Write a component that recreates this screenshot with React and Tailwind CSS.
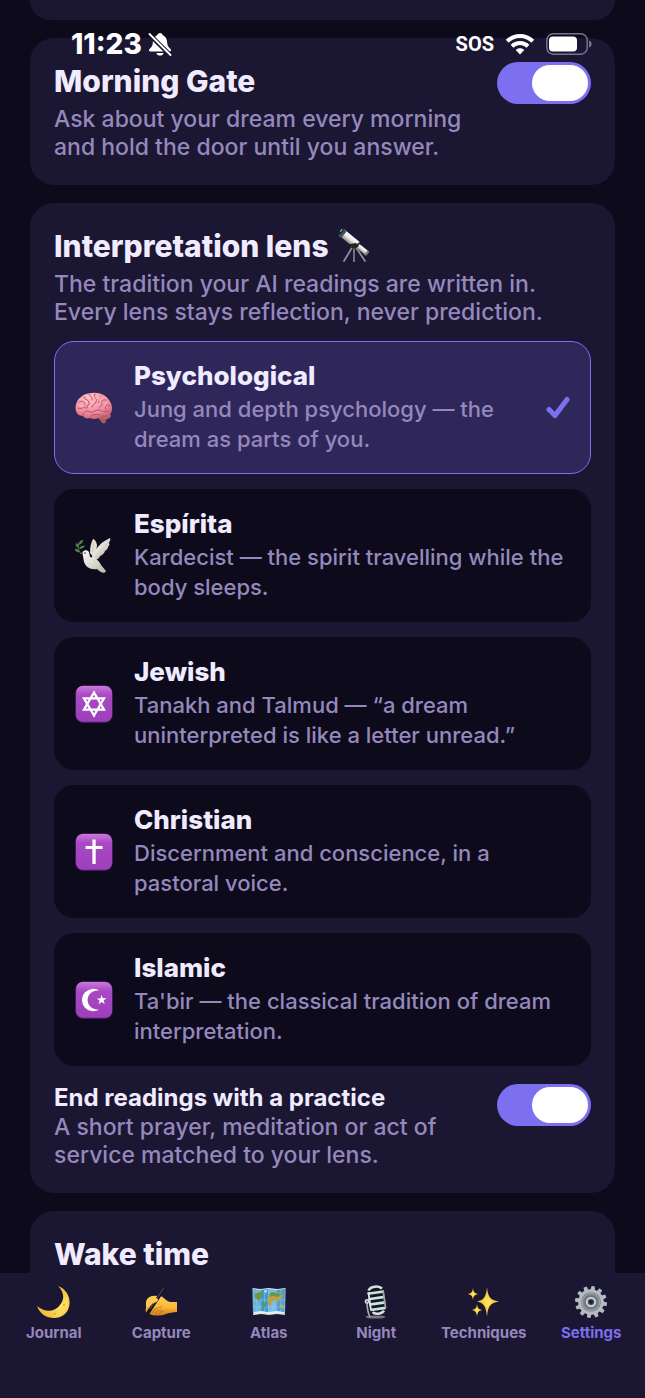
import React, { useState } from "react";

const svg = "block shrink-0";

function Telescope() {
  return (
    <svg className={svg + " h-9 w-9"} viewBox="0 0 36 36" aria-hidden="true">
      <defs>
        <linearGradient id="tube" x1="0" y1="0" x2="0" y2="1">
          <stop offset="0" stopColor="#ffffff" />
          <stop offset="0.5" stopColor="#e9e4dc" />
          <stop offset="1" stopColor="#8c857f" />
        </linearGradient>
      </defs>
      <path d="M16 18 7 33M17 18v15M18 18l10 15" stroke="#8b8f98" strokeWidth="1.8" strokeLinecap="round" />
      <path d="M17 19v13" stroke="#5b5e68" strokeWidth="1" />
      <g transform="rotate(39 17 15)">
        <rect x="2" y="10.6" width="19" height="8" rx="1" fill="url(#tube)" />
        <rect x="-1" y="10" width="5" height="9.2" rx="2" fill="#43535d" />
        <ellipse cx="-0.4" cy="14.6" rx="1.8" ry="3.8" fill="#16242c" />
        <ellipse cx="-0.8" cy="13.4" rx="0.8" ry="1.8" fill="#72a5ae" />
        <rect x="20" y="11.5" width="2" height="6.4" fill="#3a3a42" />
        <rect x="22" y="12.3" width="11" height="5" rx="1" fill="url(#tube)" />
        <rect x="32" y="12" width="2.6" height="5.6" rx="1" fill="#85808a" />
      </g>
      <path d="m13 16 6-1 3 3-5 3-4-2z" fill="#25252e" />
    </svg>
  );
}

function Brain() {
  return (
    <svg className={svg + " h-[38px] w-[38px]"} viewBox="0 0 38 38" aria-hidden="true">
      <defs>
        <radialGradient id="brain" cx="0.4" cy="0.2" r="0.9">
          <stop offset="0" stopColor="#ffc0c7" />
          <stop offset="0.6" stopColor="#f190a0" />
          <stop offset="1" stopColor="#bd5669" />
        </radialGradient>
      </defs>
      <path d="M20 27c3 1 4 3 7 7 2 1 4 0 4-2l-1-6z" fill="#a65b59" />
      <path d="M22 26c1 5 11 7 14 1l-2-5-10 1z" fill="#b76368" />
      <path d="M2 24C-1 20 1 11 6 8c3-3 7-4 11-4 7-1 14 2 17 7 3 4 4 9 2 13-2 3-6 3-9 2-3 4-8 5-12 3-3 1-6 0-7-2-3 0-5-1-6-3z" fill="url(#brain)" />
      <g fill="none" stroke="#b64f68" strokeWidth="1" strokeLinecap="round">
        <path d="M4 13c4-2 6 0 6 3M9 8c0 3 4 2 5 5s-3 3-2 6M14 5c1 3 4 3 3 6M20 5c-3 4 3 4 1 8-1 3-4 2-4 5M26 7c-4 2 0 5-3 7M31 11c-4-1-5 2-4 4s-3 2-3 4M35 17c-4-3-6 1-4 4M3 19c4 2 5-2 8 0M8 26c1-4 4-5 7-3 3 1 5-2 8-2 4 0 5 3 11 1M16 28c0-3 6-3 9-2" />
      </g>
      <g fill="none" stroke="#ffd0d2" strokeWidth="0.7" strokeLinecap="round">
        <path d="M6 10c2-1 3 1 5 3M17 6c2 1 1 3 3 4M24 7c1 2-1 3 1 5M32 13c-2 1-1 3-2 4M4 16c1 1 3 0 4 2" />
      </g>
    </svg>
  );
}

function Dove() {
  return (
    <svg className={svg + " h-[38px] w-[38px]"} viewBox="0 0 38 38" aria-hidden="true">
      <defs>
        <linearGradient id="dove" x1="0" y1="0" x2="1" y2="1">
          <stop offset="0" stopColor="#fffef8" />
          <stop offset="1" stopColor="#bdb8ae" />
        </linearGradient>
      </defs>
      <path d="M15 16c0-6 1-10 3-14 2 0 4 4 4 7l-3 12z" fill="#e4dfd6" />
      <path d="M17 19C20 12 26 5 35 1c1 2-1 4-1 5 1 1 0 3-1 4 0 2-2 3-3 4-1 3-3 4-5 5-1 3-4 4-7 5z" fill="url(#dove)" />
      <path d="M7 16c1-3 5-4 7-1l1 5c4 0 9 3 11 8l5 6c-1 3-5 2-9-2-7 1-11-2-13-7l-1-6z" fill="url(#dove)" />
      <path d="M20 20 34 5M21 21l11-10M22 22l7-7M19 5l-2 10M21 29l7 4M20 31l8 3" stroke="#c2bcb2" strokeWidth="0.6" fill="none" />
      <circle cx="10" cy="16" r="0.8" fill="#28232b" />
      <path d="m8 15-3 1 3 2z" fill="#6c5d57" />
      <path d="M6 17C3 13 3 10 4 5" stroke="#4d762f" strokeWidth="1" fill="none" />
      <g fill="#538543">
        <path d="M4 8C4 4 6 3 8 3c0 3-2 4-4 5zM4 11C1 10 0 8 1 6c3 1 3 3 3 5zM4 12c1-3 3-4 6-3-1 2-4 3-6 3zM5 15c-3 1-5-1-5-3 2-1 4 1 5 3z" />
      </g>
    </svg>
  );
}

function Badge({ id, children }) {
  return (
    <svg className={svg + " h-[38px] w-[38px]"} viewBox="0 0 38 38" aria-hidden="true">
      <defs>
        <linearGradient id={id} x1="0" y1="0" x2="0" y2="1">
          <stop offset="0" stopColor="#c979dc" />
          <stop offset="0.25" stopColor="#a94ac4" />
          <stop offset="1" stopColor="#9c3fbb" />
        </linearGradient>
      </defs>
      <rect x="0.5" y="0.5" width="37" height="37" rx="7.5" fill="#7a2a98" />
      <rect x="1" y="1" width="36" height="35.5" rx="7" fill={"url(#" + id + ")"} />
      {children}
    </svg>
  );
}

function StarBadge() {
  return (
    <Badge id="badge-star">
      <path d="M19 7.500 29 24.600H9zM19 30.500 9 13.400h20z" fill="none" stroke="#fff" strokeWidth="2.3" />
    </Badge>
  );
}
function CrossBadge() {
  return (
    <Badge id="badge-cross">
      <path d="M17.400 6.500h3.300v6.500h6.800v3h-6.800v15h-3.300V16h-6.800V13h6.800z" fill="#fff" />
    </Badge>
  );
}
function CrescentBadge() {
  return (
    <Badge id="badge-crescent">
      <path d="M24.500 9.800A11.200 11.200 0 1 0 24.500 28.200A9.500 9.500 0 1 1 24.500 9.800z" fill="#fff" />
      <path d="m26.500 14 1.300 3.300 3.700-.2-2.900 2.300 1.200 3.600-3.200-1.900-2.900 2.200.9-3.700-2.900-2 3.700-.2z" fill="#fff" />
    </Badge>
  );
}

function Moon() {
  return (
    <svg className={svg + " h-[34px] w-[34px]"} viewBox="0 0 34 34" aria-hidden="true">
      <defs>
        <radialGradient id="moon" cx="0.7" cy="0.6" r="0.6">
          <stop offset="0" stopColor="#ffe56e" />
          <stop offset="1" stopColor="#f0b936" />
        </radialGradient>
      </defs>
      <path d="M21 1c17 6 15 32-4 32C9 33 3 29 0 21c8 7 18 6 23-1 5-6 4-13-2-19z" fill="url(#moon)" />
      <path d="M29 12c3 10-3 18-13 19" fill="none" stroke="#ffdf61" strokeWidth="1.200" />
      <circle cx="27" cy="20" r="1" fill="#dda12c" />
      <circle cx="18" cy="29" r="1" fill="#dda12c" />
    </svg>
  );
}

function WritingHand() {
  return (
    <svg className={svg + " h-[34px] w-[34px]"} viewBox="0 0 34 34" aria-hidden="true">
      <defs>
        <linearGradient id="hand" x1="0" y1="0" x2="0" y2="1">
          <stop offset="0" stopColor="#ffd15b" />
          <stop offset="0.600" stopColor="#f8b637" />
          <stop offset="1" stopColor="#cf7c1d" />
        </linearGradient>
      </defs>
      <path d="M2 18c0-5 5-8 10-7 3-1 6 0 9 3 2 2 4 3 6 3h6v10c-4 0-8 1-11 2-5 2-13 2-16 0-4 0-5-3-4-6z" fill="url(#hand)" />
      <path d="M8 28c2-4 5-6 10-6M11 29c1-3 3-4 6-4M15 29c1-2 3-3 5-3" stroke="#c87920" strokeWidth="1.100" fill="none" />
      <path d="M20 1c2-1 3 0 2.500 2L6 28l-4.500 5-1-1L3 26z" fill="#17161e" />
      <path d="M20 2.500 6 24" stroke="#656475" strokeWidth="0.800" />
      <path d="M3 15c4-5 11-3 11 0-1 3-5 2-7 5-2 3-4 3-5 0z" fill="#ffcb51" />
      <path d="M14 15c-1 3-5 2-7 5-1 2-2 2.500-3 2" fill="none" stroke="#d58a26" strokeWidth="0.900" />
    </svg>
  );
}

function WorldMap() {
  return (
    <svg className={svg + " h-[34px] w-[34px]"} viewBox="0 0 34 34" aria-hidden="true">
      <path d="m.5 3 8 1 8-1 9 1 8-1-.500 27-8-1-8 1-8-1-8 1z" fill="#dbe4db" />
      <path d="m1 4 7.500 1v22L1 29z" fill="#66b5e5" />
      <path d="m8.500 5 8-1v24l-8-1z" fill="#3b99d4" />
      <path d="m16.500 4 8.500 1v22l-8.500 1z" fill="#70bde9" />
      <path d="m25 5 8-1-.500 25-7.500-2z" fill="#469fd6" />
      <path d="M1 15h32M1 22h32M5 4v24M12.500 4v24M21 4v24M29 4v24" stroke="#a8d6ed" strokeWidth="0.400" />
      <path d="m3 9 4-2 5 1-2 4-2 2-1 3-2-3-2-1z" fill="#729545" />
      <path d="m10 17 3 1 1 2-3 5-1-4z" fill="#609952" />
      <path d="m16 12 3-4 4 1 4-2 4 3-1 3-3 2-2 3-2-3-3 2-2 5-2-4-1-3z" fill="#bda24d" />
      <path d="m17 9 3-2 5 1 5 1-4 3-5-1-2 1z" fill="#66994b" />
      <path d="m27 21 2-2 3 2-1 3z" fill="#c4ac6a" />
      <path d="m12 6 3-1-1 3z" fill="#eef7f8" />
      <path d="m2 27 7-1 7 1 9-1 7 1v2l-7-1-8 1-8-1-7 1z" fill="#e4eef0" />
    </svg>
  );
}

function Microphone() {
  return (
    <svg className={svg + " h-[34px] w-[34px]"} viewBox="0 0 34 34" aria-hidden="true">
      <defs>
        <linearGradient id="mic" x1="0" y1="0" x2="1" y2="0">
          <stop offset="0" stopColor="#8c9298" />
          <stop offset="0.400" stopColor="#f1f5f5" />
          <stop offset="1" stopColor="#90999f" />
        </linearGradient>
      </defs>
      <ellipse cx="16.500" cy="32" rx="10" ry="1.600" fill="#77787f" />
      <path d="M8 17c0 7 1 11 3 15" fill="none" stroke="#a9aeb2" strokeWidth="1.600" />
      <g transform="rotate(-8 18 15)">
        <rect x="9" y="1" width="17.500" height="28" rx="6.500" fill="#10191f" />
        <path d="M9.500 7.500h16.500M9.500 13h16.500M9.500 18.500h16.500M10 24h15.500" stroke="#cfe0e6" strokeWidth="2.600" />
        <path d="M11 4.500c2-4 11-4 13.500 0M12 26.500c2 3 9 3 11.500 0" stroke="#d7dfe1" strokeWidth="2.600" fill="none" />
        <rect x="9.700" y="6" width="1.800" height="18" fill="#e1e7e8" />
        <rect x="24.500" y="6" width="1.800" height="18" fill="#9ba3a8" />
      </g>
      <circle cx="8" cy="16.500" r="2.400" fill="#d5d9dc" />
      <circle cx="8" cy="16.500" r="1" fill="#72777e" />
    </svg>
  );
}

function Sparkles() {
  return (
    <svg className={svg + " h-[34px] w-[34px]"} viewBox="0 0 34 34" aria-hidden="true">
      <defs>
        <radialGradient id="spark">
          <stop offset="0" stopColor="#ffed62" />
          <stop offset="1" stopColor="#f4a928" />
        </radialGradient>
      </defs>
      <path d="M20 2c1 10 3 13 12 14.500C23 18 21 21 20 32c-1-11-3-14-10-15.500C17 15 19 12 20 2z" fill="url(#spark)" />
      <path d="M6 3c.500 4 1.500 5 5 6-3.500 1-4.500 2-5 6-.500-4-1.500-5-5-6 3.500-1 4.500-2 5-6z" fill="url(#spark)" />
      <path d="M10 19c.500 4 1.500 5 5 6-3.500 1-4.500 2-5 7-.500-5-1.500-6-5-7 3.500-1 4.500-2 5-6z" fill="url(#spark)" />
    </svg>
  );
}

function Gear() {
  const teeth = [0, 30, 60, 90, 120, 150, 180, 210, 240, 270, 300, 330];
  return (
    <svg className={svg + " h-[34px] w-[34px]"} viewBox="0 0 34 34" aria-hidden="true">
      {teeth.map((a) => (
        <path key={a} d="m14.700 6 .6-5h3.400l.6 5z" fill="#b6bac2" transform={"rotate(" + (a + 8) + " 17 17)"} />
      ))}
      <circle cx="17" cy="17" r="12.800" fill="#b5bac1" />
      <circle cx="17" cy="17" r="9.800" fill="#777e85" />
      <circle cx="17" cy="17" r="8.500" fill="none" stroke="#a5abb2" />
      <circle cx="17" cy="17" r="6" fill="#60676e" />
      <circle cx="17" cy="17" r="4.200" fill="#383f4a" stroke="#c7cbd1" strokeWidth="2.300" />
      <circle cx="17" cy="17" r="1.800" fill="#20202f" />
    </svg>
  );
}

function StatusBar() {
  return (
    <header className="pointer-events-none absolute inset-x-0 top-0 z-10 flex h-[88px] items-center justify-between pr-[53px] pl-[71px] text-white">
      <div className="flex items-center gap-[6px]">
        <span className="text-[28px] leading-8 font-extrabold">11:23</span>
        <svg className={svg + " h-6 w-6"} viewBox="0 0 24 24" role="img" aria-label="Silent mode">
          <defs>
            <mask id="bell-cut">
              <rect width="24" height="24" fill="#fff" />
              <path d="M0 1 24 25" stroke="#000" strokeWidth="4.500" />
            </mask>
          </defs>
          <g fill="#fff" mask="url(#bell-cut)">
            <path d="M12 1c1.500 0 2.500 1 2.700 2.200C18 4.500 19 7.500 19.200 11c.2 3 1.500 4.500 3.300 6 1 .9.600 2.500-.8 2.500H2.300C.900 19.500.500 18 1.500 17c1.800-1.500 3.100-3 3.300-6C5 7.500 6 4.500 9.300 3.200 9.500 2 10.500 1 12 1z" />
            <path d="M8.300 21h7.400c-.5 1.700-2 2.600-3.700 2.600S8.800 22.700 8.300 21z" />
          </g>
          <path d="m1.500 2 21 21" stroke="#fff" strokeWidth="1.800" strokeLinecap="round" />
        </svg>
      </div>
      <div className="flex items-center gap-[11px]">
        <span className="font-['Roboto',sans-serif] text-[20px] leading-8 font-bold">SOS</span>
        <svg className={svg + " h-[22px] w-[30px]"} viewBox="0 0 30 22" role="img" aria-label="Wi-Fi">
          <g fill="none" stroke="#fff" strokeWidth="4">
            <path d="M2.200 8.200c7.200-7 18.400-7 25.600 0" />
            <path d="M7 13.200c4.600-4.300 11.400-4.300 16 0" />
          </g>
          <path d="M15 21.500 10.700 17c2.400-2.200 6.200-2.200 8.600 0z" fill="#fff" />
        </svg>
        <svg className={svg + " h-[22px] w-[46px]"} viewBox="0 0 46 22" role="img" aria-label="Battery">
          <rect x="0.800" y="0.800" width="40.400" height="20.400" rx="6.500" fill="none" stroke="#77738a" strokeWidth="1.500" />
          <rect x="3" y="3.500" width="28" height="15" rx="4" fill="#fff" />
          <path d="M43 7.500c3.500.8 3.500 6.200 0 7z" fill="#77738a" />
        </svg>
      </div>
    </header>
  );
}

function Toggle({ id }) {
  const [on, setOn] = useState(true);
  return (
    <input
      id={id}
      type="checkbox"
      role="switch"
      checked={on}
      onChange={() => setOn(!on)}
      className="flex h-[42px] w-[94px] shrink-0 cursor-pointer appearance-none items-center rounded-full bg-[#3a3360] px-[3px] before:block before:h-9 before:w-14 before:rounded-full before:bg-white checked:justify-end checked:bg-[#7c6ff0]"
    />
  );
}

const lenses = [
  { name: "Psychological", text: "Jung and depth psychology — the dream as parts of you.", Icon: Brain },
  { name: "Espírita", text: "Kardecist — the spirit travelling while the body sleeps.", Icon: Dove },
  { name: "Jewish", text: "Tanakh and Talmud — “a dream uninterpreted is like a letter unread.”", Icon: StarBadge },
  { name: "Christian", text: "Discernment and conscience, in a pastoral voice.", Icon: CrossBadge },
  { name: "Islamic", text: "Ta'bir — the classical tradition of dream interpretation.", Icon: CrescentBadge },
];

function LensOption({ lens, selected, onSelect }) {
  const { name, text, Icon } = lens;
  return (
    <label
      className={
        "relative flex cursor-pointer items-center gap-[21px] rounded-[20px] border px-5 py-[19px] " +
        (selected ? "border-[#7c6ff0] bg-[#2f2759]" : "border-[#0d0a1b] bg-[#0d0a1b]")
      }
    >
      <input type="radio" name="lens" value={name} checked={selected} onChange={onSelect} className="sr-only" />
      <Icon />
      <span className="flex flex-1 flex-col gap-[3px]">
        <span className="text-[26px] leading-[30px] font-extrabold text-[#f0ebff]">{name}</span>
        <span className="text-[22px] leading-[30px] font-medium text-[#9488bd]">{text}</span>
      </span>
      {selected && (
        <svg className={svg + " h-6 w-6"} viewBox="0 0 24 24" aria-hidden="true">
          <path d="m3 13.500 6 6L21 3.500" fill="none" stroke="#7c6ff0" strokeWidth="5" strokeLinecap="round" strokeLinejoin="round" />
        </svg>
      )}
    </label>
  );
}

const card = "rounded-[24px] bg-[#1b1631] p-6";
const heading = "text-[30px] leading-[38px] font-extrabold text-[#f0ebff]";
const body = "text-[23px] leading-7 font-medium text-[#9488bd]";

const tabs = [
  { name: "Journal", Icon: Moon },
  { name: "Capture", Icon: WritingHand },
  { name: "Atlas", Icon: WorldMap },
  { name: "Night", Icon: Microphone },
  { name: "Techniques", Icon: Sparkles },
  { name: "Settings", Icon: Gear, current: true },
];

export default function App() {
  const [lens, setLens] = useState("Psychological");
  return (
    <div className="relative flex h-screen flex-col bg-[#0d0a1b] font-['Inter',sans-serif]">
      <StatusBar />
      <main className="flex min-h-0 flex-1 flex-col gap-[18px] overflow-y-auto px-[30px] [scrollbar-width:none] *:shrink-0">
        <div className="h-5 rounded-b-[24px] bg-[#1b1631]" />

        <section className={card + " flex items-start justify-between"}>
          <div className="flex max-w-[420px] flex-col gap-[5px]">
            <h2 className={heading}>
              <label htmlFor="morning-gate">Morning Gate</label>
            </h2>
            <p className={body}>Ask about your dream every morning and hold the door until you answer.</p>
          </div>
          <Toggle id="morning-gate" />
        </section>

        <section className={card}>
          <h2 className={heading + " flex items-center gap-2"}>
            Interpretation lens <Telescope />
          </h2>
          <p className={body + " mt-[5px]"}>
            The tradition your AI readings are written in. Every lens stays reflection, never prediction.
          </p>
          <div role="radiogroup" aria-label="Interpretation lens" className="mt-[15px] flex flex-col gap-[15px]">
            {lenses.map((l) => (
              <LensOption key={l.name} lens={l} selected={lens === l.name} onSelect={() => setLens(l.name)} />
            ))}
          </div>
          <div className="mt-[18px] flex items-start justify-between">
            <div className="flex max-w-[420px] flex-col gap-px">
              <label htmlFor="practice" className="text-[24px] leading-7 font-bold text-[#f0ebff]">
                End readings with a practice
              </label>
              <p className={body}>A short prayer, meditation or act of service matched to your lens.</p>
            </div>
            <Toggle id="practice" />
          </div>
        </section>

        <section className={card}>
          <h2 className={heading}>Wake time</h2>
        </section>
      </main>

      <nav className="grid h-[125px] shrink-0 grid-cols-6 items-start bg-[#1b1631] pt-3">
        {tabs.map(({ name, Icon, current }) => (
          <a
            key={name}
            href={"#" + name.toLowerCase()}
            aria-current={current ? "page" : undefined}
            className={
              "flex flex-col items-center gap-1 text-[15px] leading-5 font-bold " +
              (current ? "text-[#7c6ff0]" : "text-[#9488bd]")
            }
          >
            <Icon />
            {name}
          </a>
        ))}
      </nav>
    </div>
  );
}
